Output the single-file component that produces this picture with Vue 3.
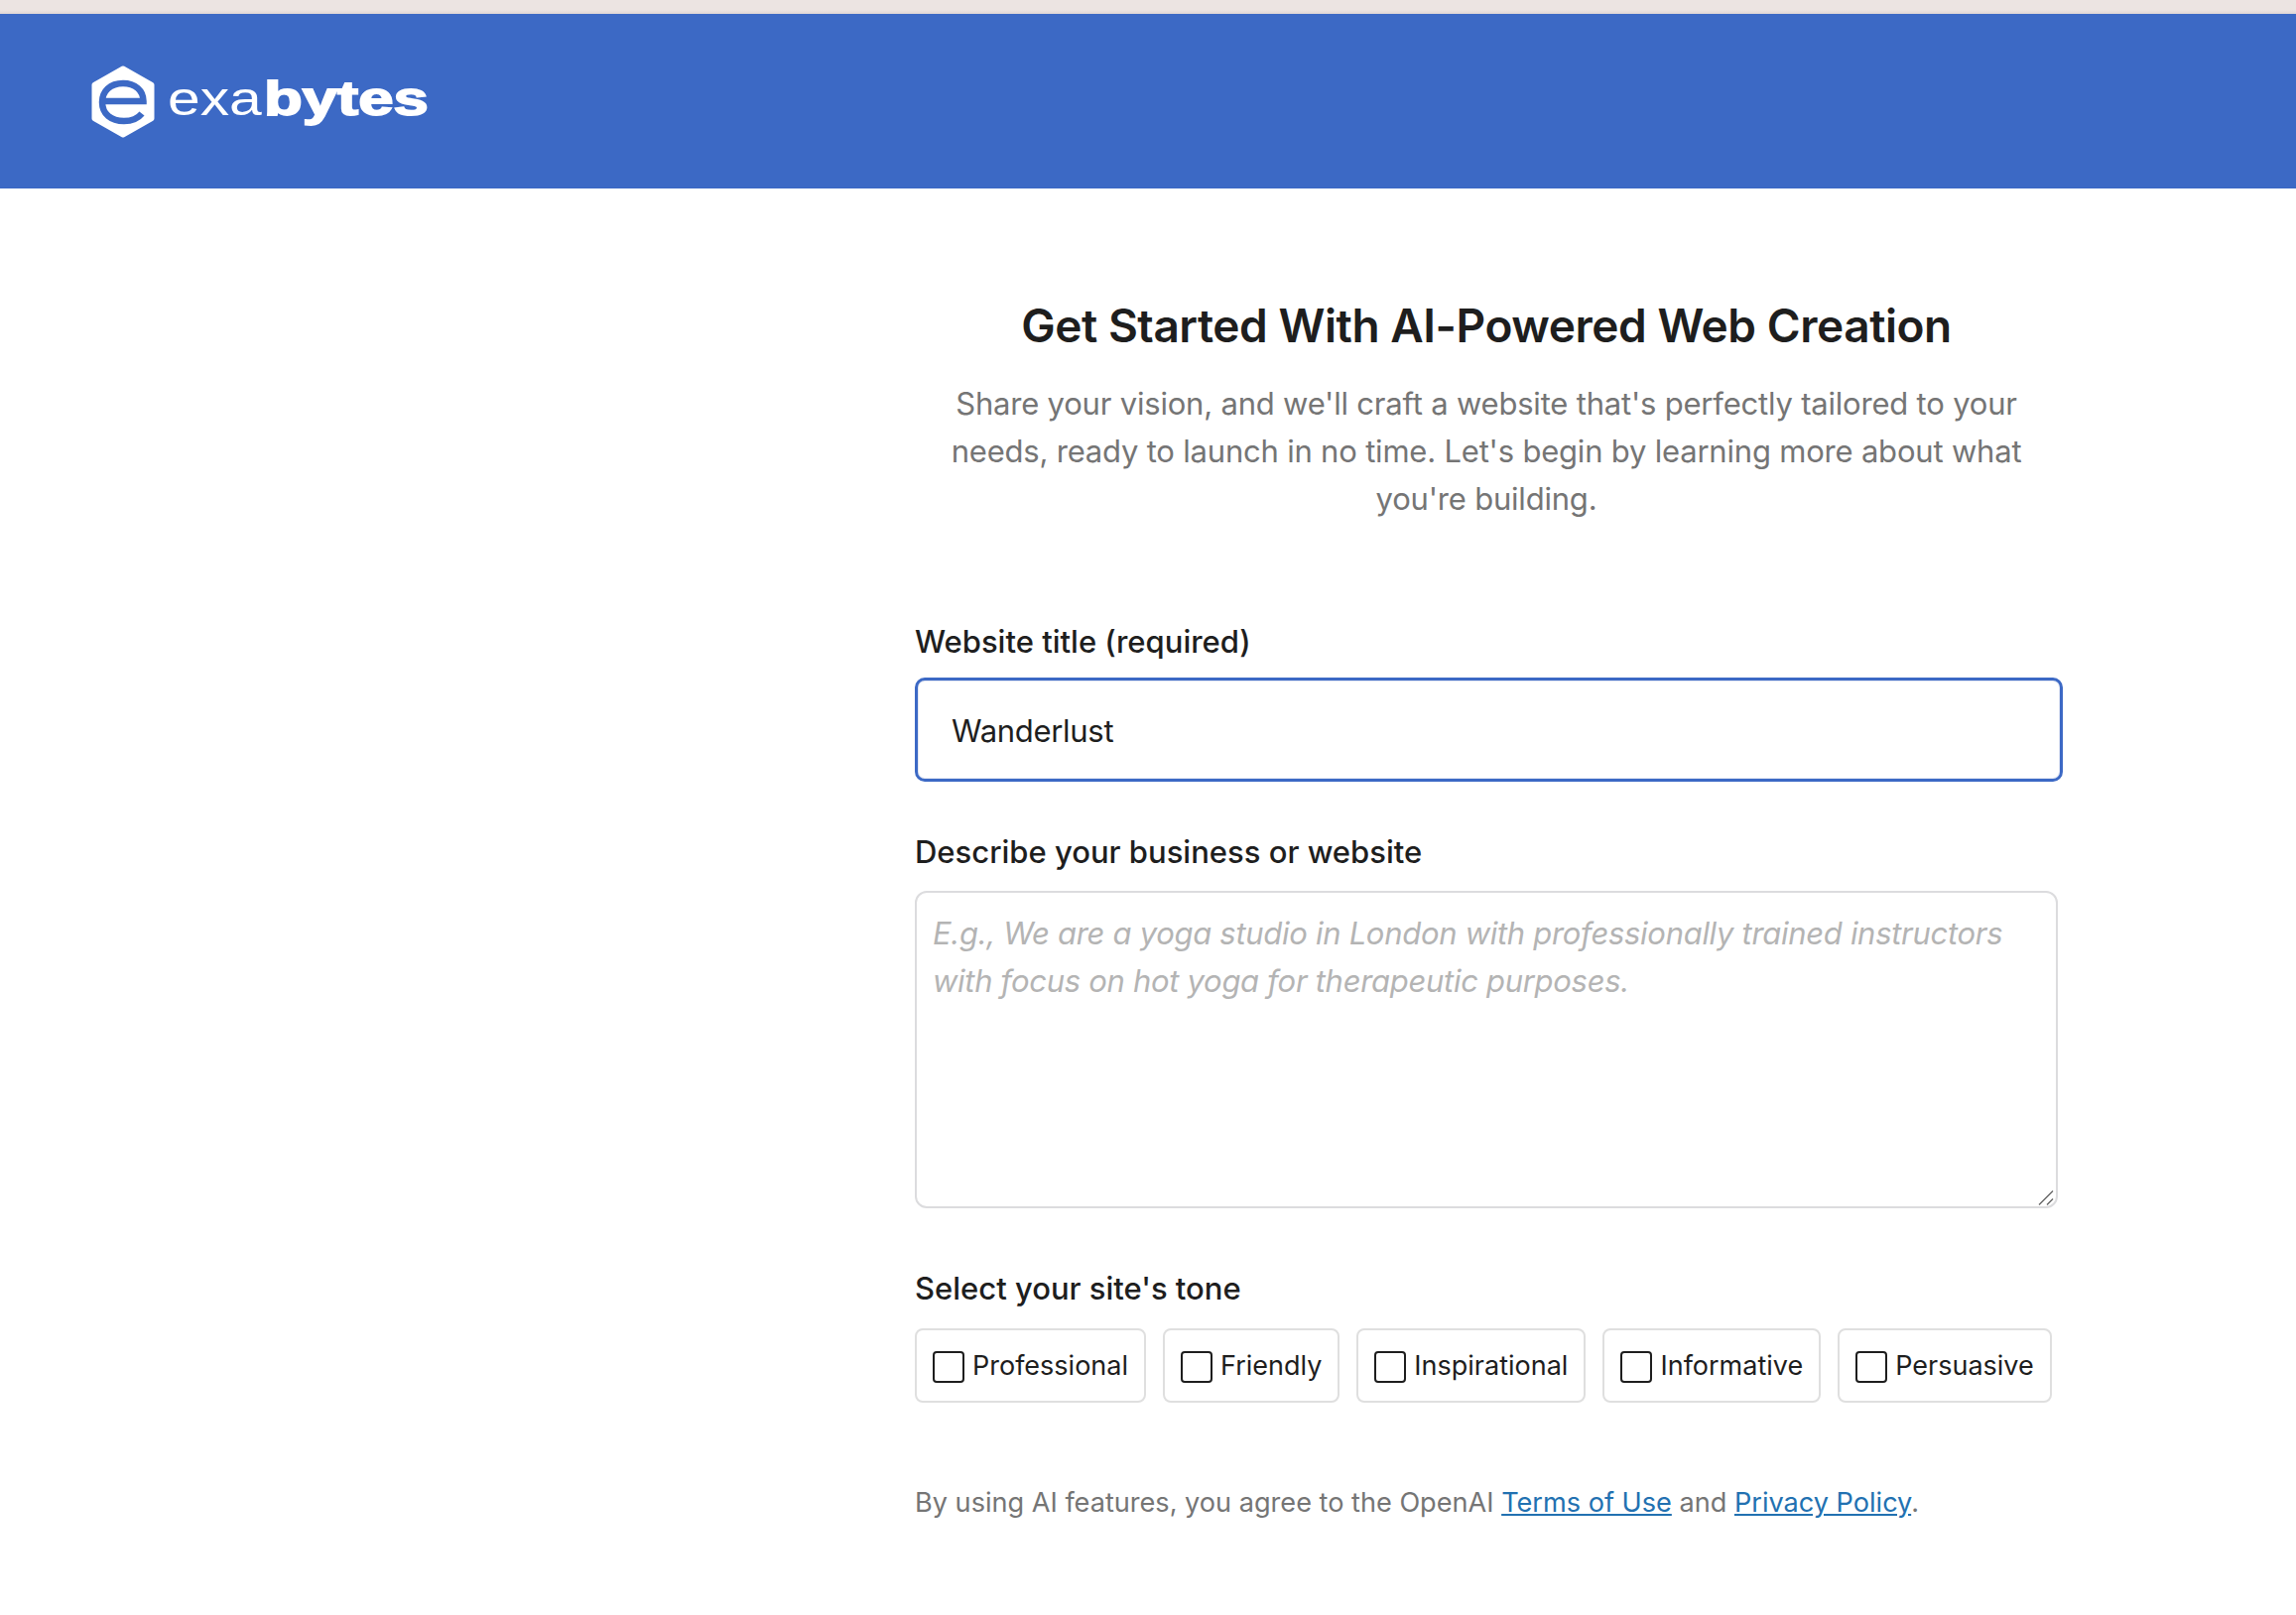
<script setup>
const tones = ['Professional', 'Friendly', 'Inspirational', 'Informative', 'Persuasive']
</script>

<template>
  <div class="page">
    <div class="topstrip"></div>
    <header class="header">
      <div class="logo">
        <svg class="mark" width="64" height="73" viewBox="0 0 64 73">
          <path d="M32 3 L61 19.5 V53.5 L32 70 L3 53.5 V19.5 Z" fill="#fff" stroke="#fff" stroke-width="5" stroke-linejoin="round" />
          <path d="M11 36 H52.5 C52.5 25 44 18 32 18 C19 18 11 26 11 37 C11 49 20 56 33 56 C41 56 47 53.5 51 48.5" fill="none" stroke="#3c69c5" stroke-width="6.5" />
        </svg>
        <span class="wordmark"><span class="exa">exa</span><span class="bytes">bytes</span></span>
      </div>
    </header>
    <main class="main">
      <section class="hero">
        <h1>Get Started With AI-Powered Web Creation</h1>
        <p>Share your vision, and we'll craft a website that's perfectly tailored to your needs, ready to launch in no time. Let's begin by learning more about what you're building.</p>
      </section>
      <label class="label first" for="title">Website title (required)</label>
      <input id="title" class="title-input" type="text" value="Wanderlust" />
      <label class="label second" for="desc">Describe your business or website</label>
      <div class="desc-wrap">
        <textarea id="desc" class="desc" placeholder="E.g., We are a yoga studio in London with professionally trained instructors with focus on hot yoga for therapeutic purposes."></textarea>
        <svg class="grip" width="16" height="16" viewBox="0 0 16 16">
          <path d="M1 15.5 L15 1.5 M9 15.5 L15 9.5" stroke="#666" stroke-width="1.4" fill="none" />
        </svg>
      </div>
      <div class="label third">Select your site's tone</div>
      <div class="tones">
        <label v-for="tone in tones" :key="tone" class="chip">
          <input type="checkbox" class="check" />
          <span>{{ tone }}</span>
        </label>
      </div>
      <p class="terms">By using AI features, you agree to the OpenAI <a href="#">Terms of Use</a> and <a href="#">Privacy Policy</a>.</p>
    </main>
  </div>
</template>

<style>
html, body { margin: 0; background: #fff; }
</style>

<style scoped>
.page {
  width: 2314px;
  height: 1628px;
  overflow: hidden;
  background: #fff;
  font-family: Inter, "Liberation Sans", sans-serif;
}
.topstrip {
  height: 14px;
  background: linear-gradient(#ece4e2 0%, #ece4e2 70%, #dfd6d5 100%);
}
.header {
  height: 176px;
  background: #3c69c5;
  display: flex;
  align-items: flex-start;
  padding: 52px 0 0 92px;
  box-sizing: border-box;
}
.logo { display: flex; align-items: flex-start; }
.mark { display: block; flex: none; }
.wordmark {
  margin: -2px 0 0 13px;
  display: flex;
  color: #fff;
  font-family: "Liberation Sans", Arial, sans-serif;
  font-size: 49px;
  line-height: 70px;
  white-space: nowrap;
}
.exa {
  display: inline-block;
  transform: scaleX(1.2);
  transform-origin: left center;
  width: 97px;
}
.bytes {
  display: inline-block;
  font-weight: 700;
  -webkit-text-stroke: 1.8px #fff;
  transform: scaleX(1.295);
  transform-origin: left center;
}
.main {
  width: 1157px;
  margin-left: 922px;
  padding-top: 111px;
}
.hero {
  width: 1152px;
  text-align: center;
}
h1 {
  margin: 0;
  font-size: 46px;
  line-height: 54px;
  font-weight: 600;
  color: #1e1e1e;
  letter-spacing: -0.45px;
}
.hero p {
  margin: 28px auto 0;
  width: 1090px;
  font-size: 31px;
  line-height: 48px;
  letter-spacing: -0.2px;
  color: #757575;
}
.label {
  display: block;
  font-size: 31px;
  line-height: 40px;
  font-weight: 500;
  color: #1e1e1e;
}
.first { margin-top: 100px; }
.title-input {
  display: block;
  box-sizing: border-box;
  width: 1157px;
  height: 105px;
  margin-top: 16px;
  padding: 2px 34px 0;
  border: 3px solid #3c69c5;
  border-radius: 10px;
  outline: none;
  background: #fff;
  box-shadow: inset 0 0 0 1px #e2e7f3;
  font: 400 31px Inter, "Liberation Sans", sans-serif;
  letter-spacing: -0.3px;
  color: #1e1e1e;
}
.second { margin-top: 51px; }
.desc-wrap {
  position: relative;
  width: 1152px;
  height: 320px;
  margin-top: 19px;
}
.desc {
  display: block;
  box-sizing: border-box;
  width: 100%;
  height: 100%;
  padding: 17px 16px;
  border: 2px solid #dcdcde;
  border-radius: 12px;
  outline: none;
  resize: none;
  background: #fff;
  font: 400 31px/48px Inter, "Liberation Sans", sans-serif;
  letter-spacing: -0.3px;
  color: #1e1e1e;
}
.desc::placeholder {
  font-style: italic;
  color: #b4b4b4;
  opacity: 1;
}
.grip {
  position: absolute;
  right: 4px;
  bottom: 3px;
}
.third { margin-top: 61px; }
.tones {
  display: flex;
  gap: 17px;
  margin-top: 20px;
}
.chip {
  box-sizing: border-box;
  height: 75px;
  display: flex;
  align-items: center;
  gap: 8px;
  padding: 0 16px;
  border: 2px solid #dfdfdf;
  border-radius: 8px;
  font-size: 27px;
  color: #1e1e1e;
  white-space: nowrap;
}
.check {
  appearance: none;
  flex: none;
  box-sizing: border-box;
  width: 32px;
  height: 32px;
  margin: 2px 0 0;
  background: #fff;
  border: 2.5px solid #1e1e1e;
  border-radius: 4px;
}
.terms {
  margin: 81px 0 0;
  font-size: 27.12px;
  line-height: 40px;
  color: #757575;
  white-space: nowrap;
}
.terms a { color: #2271b1; text-decoration: underline; }
</style>
